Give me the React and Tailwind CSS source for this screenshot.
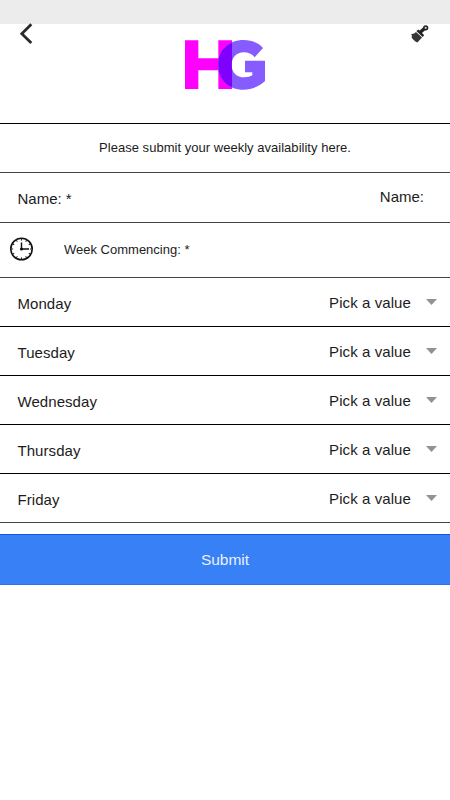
import React from "react";

const days = ["Monday", "Tuesday", "Wednesday", "Thursday", "Friday"];

function Logo() {
  const g =
    "M279 84 L254 112 C246 102 235 97 221 97 C200 97 185 113 185 134 C185 157 200 172 223 172 C233 172 241 170 247 166 L247 157 L225 157 L225 122 L285 122 L285 183 C267 200 245 209 220 209 C176 209 144 178 144 134 C144 91 176 60 221 60 C246 60 266 69 279 84 Z";
  return (
    <svg className="h-[50px] w-20" viewBox="45 60 240 150" aria-label="HG">
      <defs>
        <clipPath id="h-stem">
          <path d="M145 62 H186 V207 H145 Z" />
        </clipPath>
      </defs>
      <path d="M45 61 H85 V115 H145 V61 H186 V207 H145 V151 H85 V207 H45 Z" fill="#ff00ff" />
      <path d={g} fill="#875cff" />
      <path d={g} fill="#8000ff" clipPath="url(#h-stem)" />
    </svg>
  );
}

function BackIcon() {
  return (
    <svg className="h-[22px] w-[14px]" viewBox="0 0 14 22" fill="none" stroke="#2b2b2b" strokeWidth="2.8">
      <path d="M12.3 1.3 L2.8 10.7 L12.3 20.1" />
    </svg>
  );
}

function BrushIcon() {
  return (
    <svg className="h-[18px] w-[18px]" viewBox="0 0 18 18">
      <path d="M0 8.8 C1.8 9.4 3.4 8.6 5 7 L11 12.6 L6.4 17.4 L4.4 16.6 L2.4 14.8 L0.6 12.6 L1 10.8 Z" fill="#363636" />
      <path d="M5.4 6 L7.4 4.4 L13.2 10.2 L11.6 12 Z" fill="#222" />
      <path d="M9 7.6 L13.2 3.8" stroke="#222" strokeWidth="3.4" />
      <circle cx="14.7" cy="2.8" r="1.9" fill="#ccc" stroke="#222" strokeWidth="1.5" />
    </svg>
  );
}

function ClockIcon() {
  return (
    <svg className="h-6 w-6 shrink-0" viewBox="0 0 24 24" fill="none" stroke="#111">
      <circle cx="11.5" cy="12" r="10.7" strokeWidth="1.6" />
      <path d="M11.5 5.5 V12 H19" strokeWidth="1.4" />
      <circle cx="11.5" cy="12" r="1.6" fill="#111" stroke="none" />
      {[0, 30, 60, 90, 120, 150, 180, 210, 240, 270, 300, 330].map((a) => (
        <path key={a} d="M11.5 2 V3.6" strokeWidth="0.9" transform={`rotate(${a} 11.5 12)`} />
      ))}
    </svg>
  );
}

function DayRow({ day, last }) {
  return (
    <div
      className={`flex h-[49px] items-center justify-between border-b pl-[17.5px] pr-[13px] text-[15px] leading-5 ${
        last ? "border-[#444]" : "border-black"
      }`}
    >
      <span className="pt-1 tracking-[0.004em]">{day}</span>
      <div className="flex items-center gap-[15px]">
        <span className="pt-px tracking-[0.006em]">Pick a value</span>
        <svg className="h-[6px] w-[11px]" viewBox="0 0 11 6">
          <path d="M0 0 H11 L5.5 6 Z" fill="#929292" />
        </svg>
      </div>
    </div>
  );
}

export default function App() {
  return (
    <div className="h-[800px] w-[450px] overflow-hidden bg-white font-['Liberation_Sans',Arial,sans-serif] text-[#1c1c1c]">
      <div className="h-6 bg-[#ececec]" />
      <header className="-mt-1 flex h-[104px] items-start justify-between border-b border-black pl-[19px] pr-[21px]">
        <div className="w-[61px] pt-[3px]">
          <BackIcon />
        </div>
        <div className="pt-5">
          <Logo />
        </div>
        <div className="flex w-[60px] justify-end pt-[5px]">
          <BrushIcon />
        </div>
      </header>
      <div className="flex h-[49px] items-center justify-center border-b border-[#444] text-[13px] leading-5 tracking-[0.002em]">
        Please submit your weekly availability here.
      </div>
      <div className="flex h-[50px] items-center justify-between border-b border-[#444] pl-[17.5px] pr-[26px] text-[15px] leading-5">
        <span className="pt-[3px]">Name: *</span>
        <span className="pb-px">Name:</span>
      </div>
      <div className="flex h-[55px] items-center border-b border-[#444] pl-[10px] text-[13px] leading-5">
        <div className="pb-[2px]">
          <ClockIcon />
        </div>
        <span className="pl-[30px]">Week Commencing: *</span>
      </div>
      {days.map((day, i) => (
        <DayRow key={day} day={day} last={i === days.length - 1} />
      ))}
      <button className="mt-[11px] flex h-[51px] w-full items-center justify-center border-y border-t-[#1256e0] border-b-[#2f70f5] bg-[#3880f6] text-[15.5px] leading-5 text-[#e8f0ff]">
        Submit
      </button>
    </div>
  );
}
